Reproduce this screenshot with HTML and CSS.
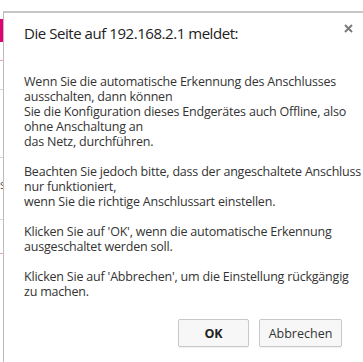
FILE: index.html
```html
<!DOCTYPE html>
<html lang="de">
<head>
    <meta charset="UTF-8">
    <title>Die Seite auf 192.168.2.1 meldet</title>
    <link rel="stylesheet" href="styles.css">
</head>
<body>

    <!-- Page behind the dialog, only a sliver is visible -->
    <div class="page">
        <div class="brand-bar"></div>
        <div class="rule rule-pink r1"></div>
        <div class="rule r2"></div>
        <div class="rule r3"></div>
        <div class="page-char">s</div>
        <div class="rule r4"></div>
        <div class="rule rule-pink r5"></div>
    </div>

    <!-- Confirm dialog -->
    <div class="dialog">
        <div class="dialog-head">
            <h1>Die Seite auf 192.168.2.1 meldet:</h1>
            <svg class="close" width="9" height="9" viewBox="0 0 9 9">
                <path d="M1 1 L8 8 M8 1 L1 8" stroke="#7b7b7b" stroke-width="2"/>
            </svg>
        </div>

        <p class="message">Wenn Sie die automatische Erkennung des Anschlusses<br>ausschalten, dann können<br>Sie die Konfiguration dieses Endgerätes auch Offline, also<br>ohne Anschaltung an<br>das Netz, durchführen.<br><br>Beachten Sie jedoch bitte, dass der angeschaltete Anschluss<br>nur funktioniert,<br>wenn Sie die richtige Anschlussart einstellen.<br><br>Klicken Sie auf 'OK', wenn die automatische Erkennung<br>ausgeschaltet werden soll.<br><br>Klicken Sie auf 'Abbrechen', um die Einstellung rückgängig<br>zu machen.</p>

        <div class="buttons">
            <button class="btn btn-ok">OK</button>
            <button class="btn">Abbrechen</button>
        </div>
    </div>

</body>
</html>
```

FILE: styles.css
```css
/* Basic reset */
* {
    margin: 0;
    padding: 0;
    box-sizing: border-box;
}

body {
    font-family: 'Open Sans', 'Noto Sans', sans-serif;
    background: #ffffff;
    color: #222;
    width: 363px;
    height: 362px;
    overflow: hidden;
}

/* Background page sliver */
.page {
    width: 3px;
    padding-top: 19px;
}

.brand-bar {
    height: 23px;
    background: #e20074;
}

.rule {
    height: 1px;
    background: #d6d6d6;
}

.rule-pink { background: #e4a3c4; }
.r1 { margin-top: 18px; }
.r2 { margin-top: 28px; }
.r3 { margin-top: 67px; }
.r4 { margin-top: 27px; }
.r5 { margin-top: 33px; }

.page-char {
    margin-top: 20px;
    font-size: 12px;
    line-height: 14px;
    color: #555;
    overflow: hidden;
}

/* Dialog box */
.dialog {
    position: absolute;
    left: 3px;
    top: 11px;
    right: 0;
    bottom: 0;
    background: #fff;
    border-top: 2px solid #c6c6c6;
    border-left: 1px solid #bcbcbc;
    padding: 9px 21px 0 20px;
}

.dialog-head {
    display: flex;
    justify-content: space-between;
    align-items: flex-start;
}

.dialog-head h1 {
    font-size: 15px;
    font-weight: 400;
    line-height: 22px;
    color: #222;
    letter-spacing: -0.45px;
}

.close {
    margin-top: 2px;
    margin-right: -11px;
}

.message {
    margin-top: 30px;
    margin-right: -21px;
    font-size: 12.5px;
    line-height: 15px;
    color: #333;
    white-space: nowrap;
    letter-spacing: -0.2px;
}

/* Buttons */
.buttons {
    display: flex;
    justify-content: flex-end;
    gap: 10px;
    margin-top: 20px;
}

.btn {
    height: 28px;
    font-family: inherit;
    font-size: 12.5px;
    color: #333;
    background: #f7f7f7;
    border: 1px solid #c8c8c8;
    border-radius: 2px;
    box-shadow: 0 1px 1px rgba(0, 0, 0, 0.06);
    width: 83px;
}

.btn-ok {
    width: 71px;
    font-weight: 700;
    color: #222;
}
```
